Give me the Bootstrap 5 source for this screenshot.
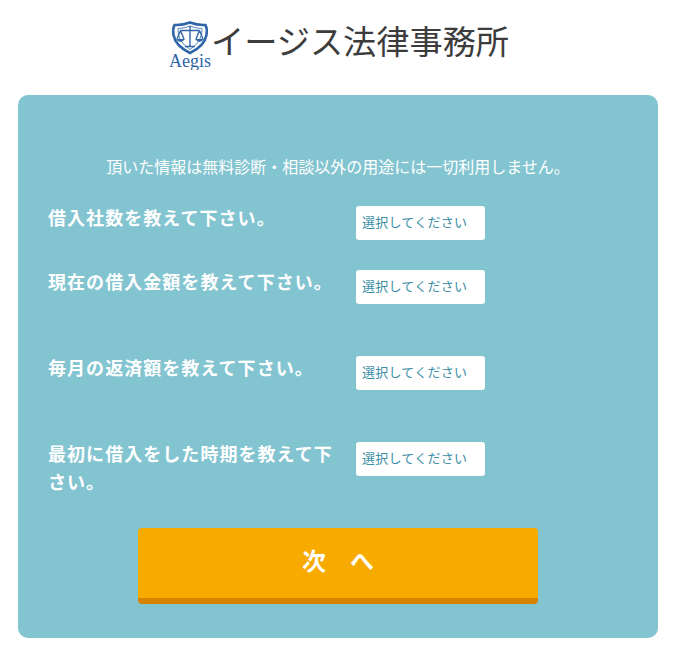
<!DOCTYPE html>
<html lang="ja">
<head>
<meta charset="utf-8">
<title>イージス法律事務所</title>
<link rel="stylesheet" href="https://cdn.jsdelivr.net/npm/bootstrap@5.3.0/dist/css/bootstrap.min.css">
<style>
html,body{height:656px;overflow:hidden}
body{background:#fff;font-family:"Noto Sans CJK JP","Liberation Sans",sans-serif;color:#333}
.logo-head{height:95px;padding:20px 0 0 2px}
.logo-mark{width:44px;height:50px;flex:none}
.logo-name{font-size:33.200px;line-height:40px;color:#3c3c3c;font-weight:400;margin-left:-1px}
.panel{margin:0 17px 0 18px;height:543px;background:#83c4d1;border-radius:10px;padding:57px 30px 0}
.notice{font-size:16px;line-height:28px;color:#fff;margin-bottom:26px;white-space:nowrap}
.q-row{--bs-gutter-x:0}
.q-r1{height:64px}
.q-r2,.q-r3,.q-r4{height:86px}
.q-label{font-size:18px;line-height:28px;font-weight:700;color:#fff;letter-spacing:1.050px;padding-right:0;margin-top:-3px}
.q-field{padding-left:18px}
.q-select{display:block;width:129px;height:34px;line-height:32px;padding:0 6px;font-size:13px;letter-spacing:.25px;background:#fff;color:#3b8ea6;border-radius:3px;border:0;white-space:nowrap}
.next-btn{display:block;width:400px;height:76px;margin:0 auto;background:#f7ab00;border:0;border-bottom:6px solid #d68400;border-radius:4px;color:#fff;font-size:24px;font-weight:700;line-height:58px;padding:0 0 6px;text-align:center}
</style>
</head>
<body>
<header class="logo-head d-flex justify-content-center align-items-start">
  <svg class="logo-mark" viewBox="0 0 44 50" role="img" aria-label="Aegis">
    <path d="M6.500 5 Q14 5.500 22 2.500 Q30 5.500 37.500 5 Q39.500 9 38.500 15 Q36.500 26 22 33 Q7.500 26 5.500 15 Q4.500 9 6.500 5Z" fill="none" stroke="#2f66a8" stroke-width="2.600"/>
    <path d="M10 8.500 Q16 8.500 22 6 Q28 8.500 34 8.500 Q35 21 22 29.500 Q9 21 10 8.500Z" fill="none" stroke="#4a7db5" stroke-width=".9"/>
    <path d="M22 6V26M17 26.500H27M12.500 10.500H31.500M12.500 10.500L9 19M12.500 10.500L16 19M31.500 10.500L28 19M31.500 10.500L35 19" fill="none" stroke="#2f66a8" stroke-width="1.400"/>
    <path d="M8 19H17Q12.500 25 8 19ZM27 19H36Q31.500 25 27 19Z" fill="#2f66a8"/>
    <text x="22" y="47" text-anchor="middle" font-family="Liberation Serif, serif" font-size="18" fill="#2f66a8">Aegis</text>
  </svg>
  <span class="logo-name">イージス法律事務所</span>
</header>
<main class="panel">
  <p class="notice text-center">頂いた情報は無料診断・相談以外の用途には一切利用しません。</p>
  <form>
    <div class="row q-row q-r1">
      <div class="col-6 q-label">借入社数を教えて下さい。</div>
      <div class="col-6 q-field"><span class="q-select">選択してください</span></div>
    </div>
    <div class="row q-row q-r2">
      <div class="col-6 q-label">現在の借入金額を教えて下さい。</div>
      <div class="col-6 q-field"><span class="q-select">選択してください</span></div>
    </div>
    <div class="row q-row q-r3">
      <div class="col-6 q-label">毎月の返済額を教えて下さい。</div>
      <div class="col-6 q-field"><span class="q-select">選択してください</span></div>
    </div>
    <div class="row q-row q-r4">
      <div class="col-6 q-label">最初に借入をした時期を教えて下さい。</div>
      <div class="col-6 q-field"><span class="q-select">選択してください</span></div>
    </div>
    <button type="button" class="next-btn">次　へ</button>
  </form>
</main>
<script src="https://cdn.jsdelivr.net/npm/bootstrap@5.3.0/dist/js/bootstrap.bundle.min.js"></script>
</body>
</html>
